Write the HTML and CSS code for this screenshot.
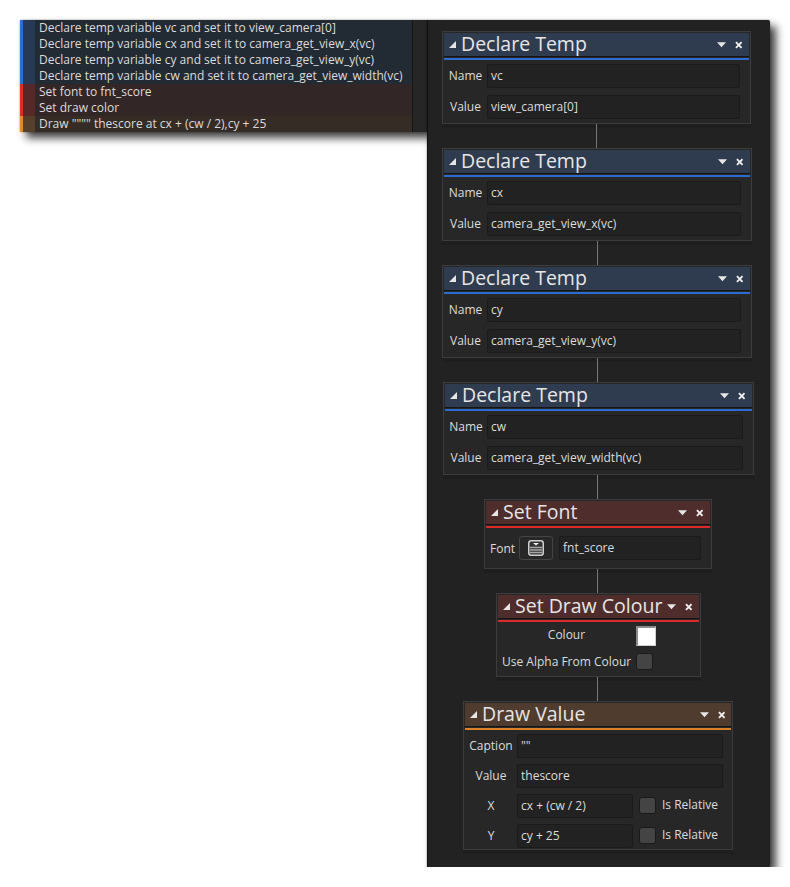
FILE: index.html
```html
<!DOCTYPE html>
<html lang="en">
<head>
    <meta charset="UTF-8">
    <title>Action Summary</title>
    <link rel="stylesheet" href="styles.css">
</head>
<body>
    <svg class="defs" width="0" height="0">
        <symbol id="collapse" viewBox="0 0 8 8"><path d="M0 8 L8 0 L8 8 Z" fill="#e6e6e6"/></symbol>
        <symbol id="menu" viewBox="0 0 10 6"><path d="M0 0 L10 0 L5 5.5 Z" fill="#e6e6e6"/></symbol>
        <symbol id="close" viewBox="0 0 8 8"><path d="M1 1 L7 7 M7 1 L1 7" stroke="#f0f0f0" stroke-width="2" fill="none"/></symbol>
    </svg>

    <div class="workspace">
        <!-- summary of the actions -->
        <div class="summary">
            <div class="summary-list">
                <div class="row blue"><span>Declare temp variable vc and set it to view_camera[0]</span></div>
                <div class="row blue"><span>Declare temp variable cx and set it to camera_get_view_x(vc)</span></div>
                <div class="row blue"><span>Declare temp variable cy and set it to camera_get_view_y(vc)</span></div>
                <div class="row blue"><span>Declare temp variable cw and set it to camera_get_view_width(vc)</span></div>
                <div class="row red"><span>Set font to fnt_score</span></div>
                <div class="row red"><span>Set draw color</span></div>
                <div class="row orange"><span>Draw """" thescore at cx + (cw / 2),cy + 25</span></div>
            </div>
        </div>

        <!-- action chain -->
        <div class="chain">
            <div class="node temp-first blue">
                <div class="node-head">
                    <svg class="ic-collapse"><use href="#collapse"/></svg>
                    <span class="node-title">Declare Temp</span>
                    <svg class="ic-menu"><use href="#menu"/></svg>
                    <svg class="ic-close"><use href="#close"/></svg>
                </div>
                <div class="node-body">
                    <div class="field"><label>Name</label><div class="input">vc</div></div>
                    <div class="field"><label>Value</label><div class="input">view_camera[0]</div></div>
                </div>
            </div>
            <div class="link link-first"></div>

            <div class="node temp blue">
                <div class="node-head">
                    <svg class="ic-collapse"><use href="#collapse"/></svg>
                    <span class="node-title">Declare Temp</span>
                    <svg class="ic-menu"><use href="#menu"/></svg>
                    <svg class="ic-close"><use href="#close"/></svg>
                </div>
                <div class="node-body">
                    <div class="field"><label>Name</label><div class="input">cx</div></div>
                    <div class="field"><label>Value</label><div class="input">camera_get_view_x(vc)</div></div>
                </div>
            </div>
            <div class="link"></div>

            <div class="node temp blue">
                <div class="node-head">
                    <svg class="ic-collapse"><use href="#collapse"/></svg>
                    <span class="node-title">Declare Temp</span>
                    <svg class="ic-menu"><use href="#menu"/></svg>
                    <svg class="ic-close"><use href="#close"/></svg>
                </div>
                <div class="node-body">
                    <div class="field"><label>Name</label><div class="input">cy</div></div>
                    <div class="field"><label>Value</label><div class="input">camera_get_view_y(vc)</div></div>
                </div>
            </div>
            <div class="link"></div>

            <div class="node temp-wide blue">
                <div class="node-head">
                    <svg class="ic-collapse"><use href="#collapse"/></svg>
                    <span class="node-title">Declare Temp</span>
                    <svg class="ic-menu"><use href="#menu"/></svg>
                    <svg class="ic-close"><use href="#close"/></svg>
                </div>
                <div class="node-body">
                    <div class="field"><label>Name</label><div class="input">cw</div></div>
                    <div class="field"><label>Value</label><div class="input">camera_get_view_width(vc)</div></div>
                </div>
            </div>
            <div class="link"></div>

            <div class="node font red">
                <div class="node-head">
                    <svg class="ic-collapse"><use href="#collapse"/></svg>
                    <span class="node-title">Set Font</span>
                    <svg class="ic-menu"><use href="#menu"/></svg>
                    <svg class="ic-close"><use href="#close"/></svg>
                </div>
                <div class="node-body">
                    <div class="field">
                        <label class="font-label">Font</label>
                        <div class="picker">
                            <svg width="16" height="16" viewBox="0 0 16 16">
                                <rect x="0.75" y="0.75" width="14.5" height="14.5" rx="2.5" fill="#333" stroke="#cfcfcf" stroke-width="1.5"/>
                                <path d="M5 3 L11 3 L8 5.5 Z" fill="#eee"/>
                                <path d="M2 7.5 H14 M2 10 H14 M2 12.5 H14" stroke="#a8a8a8" stroke-width="1.5"/>
                            </svg>
                        </div>
                        <div class="input">fnt_score</div>
                    </div>
                </div>
            </div>
            <div class="link"></div>

            <div class="node colour red">
                <div class="node-head">
                    <svg class="ic-collapse"><use href="#collapse"/></svg>
                    <span class="node-title">Set Draw Colour</span>
                    <svg class="ic-menu"><use href="#menu"/></svg>
                    <svg class="ic-close"><use href="#close"/></svg>
                </div>
                <div class="node-body">
                    <div class="field colour-row">
                        <label class="colour-label">Colour</label>
                        <div class="swatch"></div>
                    </div>
                    <div class="field alpha-row">
                        <label>Use Alpha From Colour</label>
                        <div class="check"></div>
                    </div>
                </div>
            </div>
            <div class="link"></div>

            <div class="node draw orange">
                <div class="node-head">
                    <svg class="ic-collapse"><use href="#collapse"/></svg>
                    <span class="node-title">Draw Value</span>
                    <svg class="ic-menu"><use href="#menu"/></svg>
                    <svg class="ic-close"><use href="#close"/></svg>
                </div>
                <div class="node-body">
                    <div class="field"><label>Caption</label><div class="input">""</div></div>
                    <div class="field"><label>Value</label><div class="input">thescore</div></div>
                    <div class="field">
                        <label>X</label><div class="input short">cx + (cw / 2)</div>
                        <div class="check"></div><span class="check-text">Is Relative</span>
                    </div>
                    <div class="field">
                        <label>Y</label><div class="input short">cy + 25</div>
                        <div class="check"></div><span class="check-text">Is Relative</span>
                    </div>
                </div>
            </div>
        </div>
    </div>
</body>
</html>
```

FILE: styles.css
```css
body {
    margin: 0;
    background-color: #fff;
    font-family: "Open Sans", sans-serif;
    font-size: 12px;
    color: #dcdcdc;
}
.defs {
    display: block;
}
.workspace {
    display: flex;
    align-items: flex-start;
    padding: 20px 0 0 20px;
}

/* summary panel */
.summary {
    width: 407px;
    height: 112px;
    background-color: #262626;
    box-shadow: 6px 6px 8px rgba(0,0,0,0.75), 0 0 2px rgba(0,0,0,0.4);
    border-radius: 2px 0 0 2px;
}
.summary-list {
    width: 393px;
    border-right: 1px solid #151515;
    box-sizing: border-box;
}
.row {
    height: 16px;
    line-height: 16px;
    white-space: nowrap;
    box-sizing: border-box;
    padding-left: 19px;
}
.row.blue {
    background: linear-gradient(to right, #2a6fd4 3px, #273a55 3px, #273a55 15px, #222a33 15px);
}
.row.red {
    background: linear-gradient(to right, #e02a2a 3px, #572828 3px, #572828 15px, #332626 15px);
}
.row.orange {
    background: linear-gradient(to right, #e08a2b 3px, #55402b 3px, #55402b 15px, #352c25 15px);
}

/* action chain */
.chain {
    width: 343px;
    height: 847px;
    background-color: #222;
    border-left: 1px solid #111;
    box-sizing: border-box;
    padding: 11px 0 0 14px;
    box-shadow: 6px 6px 8px rgba(0,0,0,0.75), 0 0 2px rgba(0,0,0,0.4);
    border-radius: 0 2px 2px 0;
}
.link {
    width: 1px;
    height: 24px;
    background-color: #777;
    margin-left: 155px;
}
.link-first {
    margin-left: 154px;
}
.node {
    background-color: #272727;
    border: 1px solid #3c3c3c;
    box-sizing: border-box;
    box-shadow: 0 4px 0 #1e1e1e;
}
.temp-first { width: 309px; }
.temp { width: 310px; }
.temp-wide { width: 311px; margin-left: 1px; }
.font { width: 228px; margin-left: 42px; }
.colour { width: 205px; margin-left: 54px; }
.draw { width: 270px; margin-left: 21px; }

.node-head {
    display: flex;
    align-items: center;
    height: 23px;
    margin: 1px 1px 0;
    padding: 0 7px 0 5px;
    border-bottom: 1px solid #151515;
}
.blue .node-head { background-color: #2f3b4e; }
.red .node-head { background-color: #4f2d2d; }
.orange .node-head { background-color: #4f3c2e; }
.draw .node-head { padding-right: 6px; }
.ic-collapse {
    width: 7px;
    height: 7px;
    margin-right: 5px;
    flex: none;
}
.node-title {
    flex: 1;
    font-size: 19.5px;
    line-height: 23px;
    margin-bottom: 2px;
    color: #e6e6e6;
    white-space: nowrap;
}
.ic-menu {
    width: 9px;
    height: 6px;
    margin-right: 8.5px;
    flex: none;
}
.ic-close {
    width: 7.5px;
    height: 8px;
    flex: none;
}
.node-body {
    border-top: 2px solid;
    margin: 1px 1px 0;
    padding: 4px 0;
}
.blue .node-body { border-top-color: #2a6cd0; }
.red .node-body { border-top-color: #dc2a2a; }
.orange .node-body { border-top-color: #d9822b; }

.field {
    display: flex;
    align-items: center;
    height: 24px;
    margin-bottom: 7px;
}
.field:last-child {
    margin-bottom: 0;
}
.field label {
    width: 43px;
    flex: none;
    text-align: center;
    margin-bottom: 2px;
}
.input {
    flex: none;
    height: 24px;
    line-height: 22px;
    padding-left: 3px;
    box-sizing: border-box;
    background-color: #222;
    border: 1px solid #1b1b1b;
    border-radius: 2px;
    white-space: nowrap;
}
.temp-first .input,
.temp .input,
.temp-wide .input {
    flex: 1;
    margin-right: 9px;
}
.temp-wide .field label {
    width: 42px;
}

.font .node-body {
    padding: 8px 0;
}
.font .font-label {
    width: 33px;
    margin-bottom: 0;
}
.picker {
    width: 34px;
    height: 24px;
    box-sizing: border-box;
    border: 1px solid #444;
    border-radius: 3px;
    display: flex;
    align-items: center;
    justify-content: center;
    margin-right: 6px;
    flex: none;
}
.font .input { width: 142px; }

.colour .node-body {
    padding: 4px 0 6px;
}
.colour-row {
    height: 20px;
    margin-bottom: 7px;
}
.alpha-row {
    height: 17px;
}
.colour .colour-label {
    width: 137px;
    margin-bottom: 4px;
}
.swatch {
    width: 20px;
    height: 20px;
    box-sizing: border-box;
    background-color: #fff;
    border-style: solid;
    border-width: 2px 1px 1px 2px;
    border-color: #8c8c8c #cfcfcf #cfcfcf #8c8c8c;
    margin-left: 1px;
}
.colour .alpha-row label {
    width: auto;
    margin: 0 5px 0 4px;
}
.check {
    width: 17px;
    height: 17px;
    box-sizing: border-box;
    background-color: #444;
    border: 1px solid #1a1a1a;
    border-radius: 3px;
    flex: none;
}

.draw .node-body {
    padding: 4px 0 1px;
}
.draw .field {
    margin-bottom: 6px;
}
.draw .field:last-child {
    margin-bottom: 0;
}
.draw .field label {
    width: 52px;
}
.draw .input { width: 206px; }
.draw .input.short { width: 116px; }
.draw .check { margin: 0 6px 1px 6px; }
.check-text {
    white-space: nowrap;
    margin-bottom: 4px;
}
```
